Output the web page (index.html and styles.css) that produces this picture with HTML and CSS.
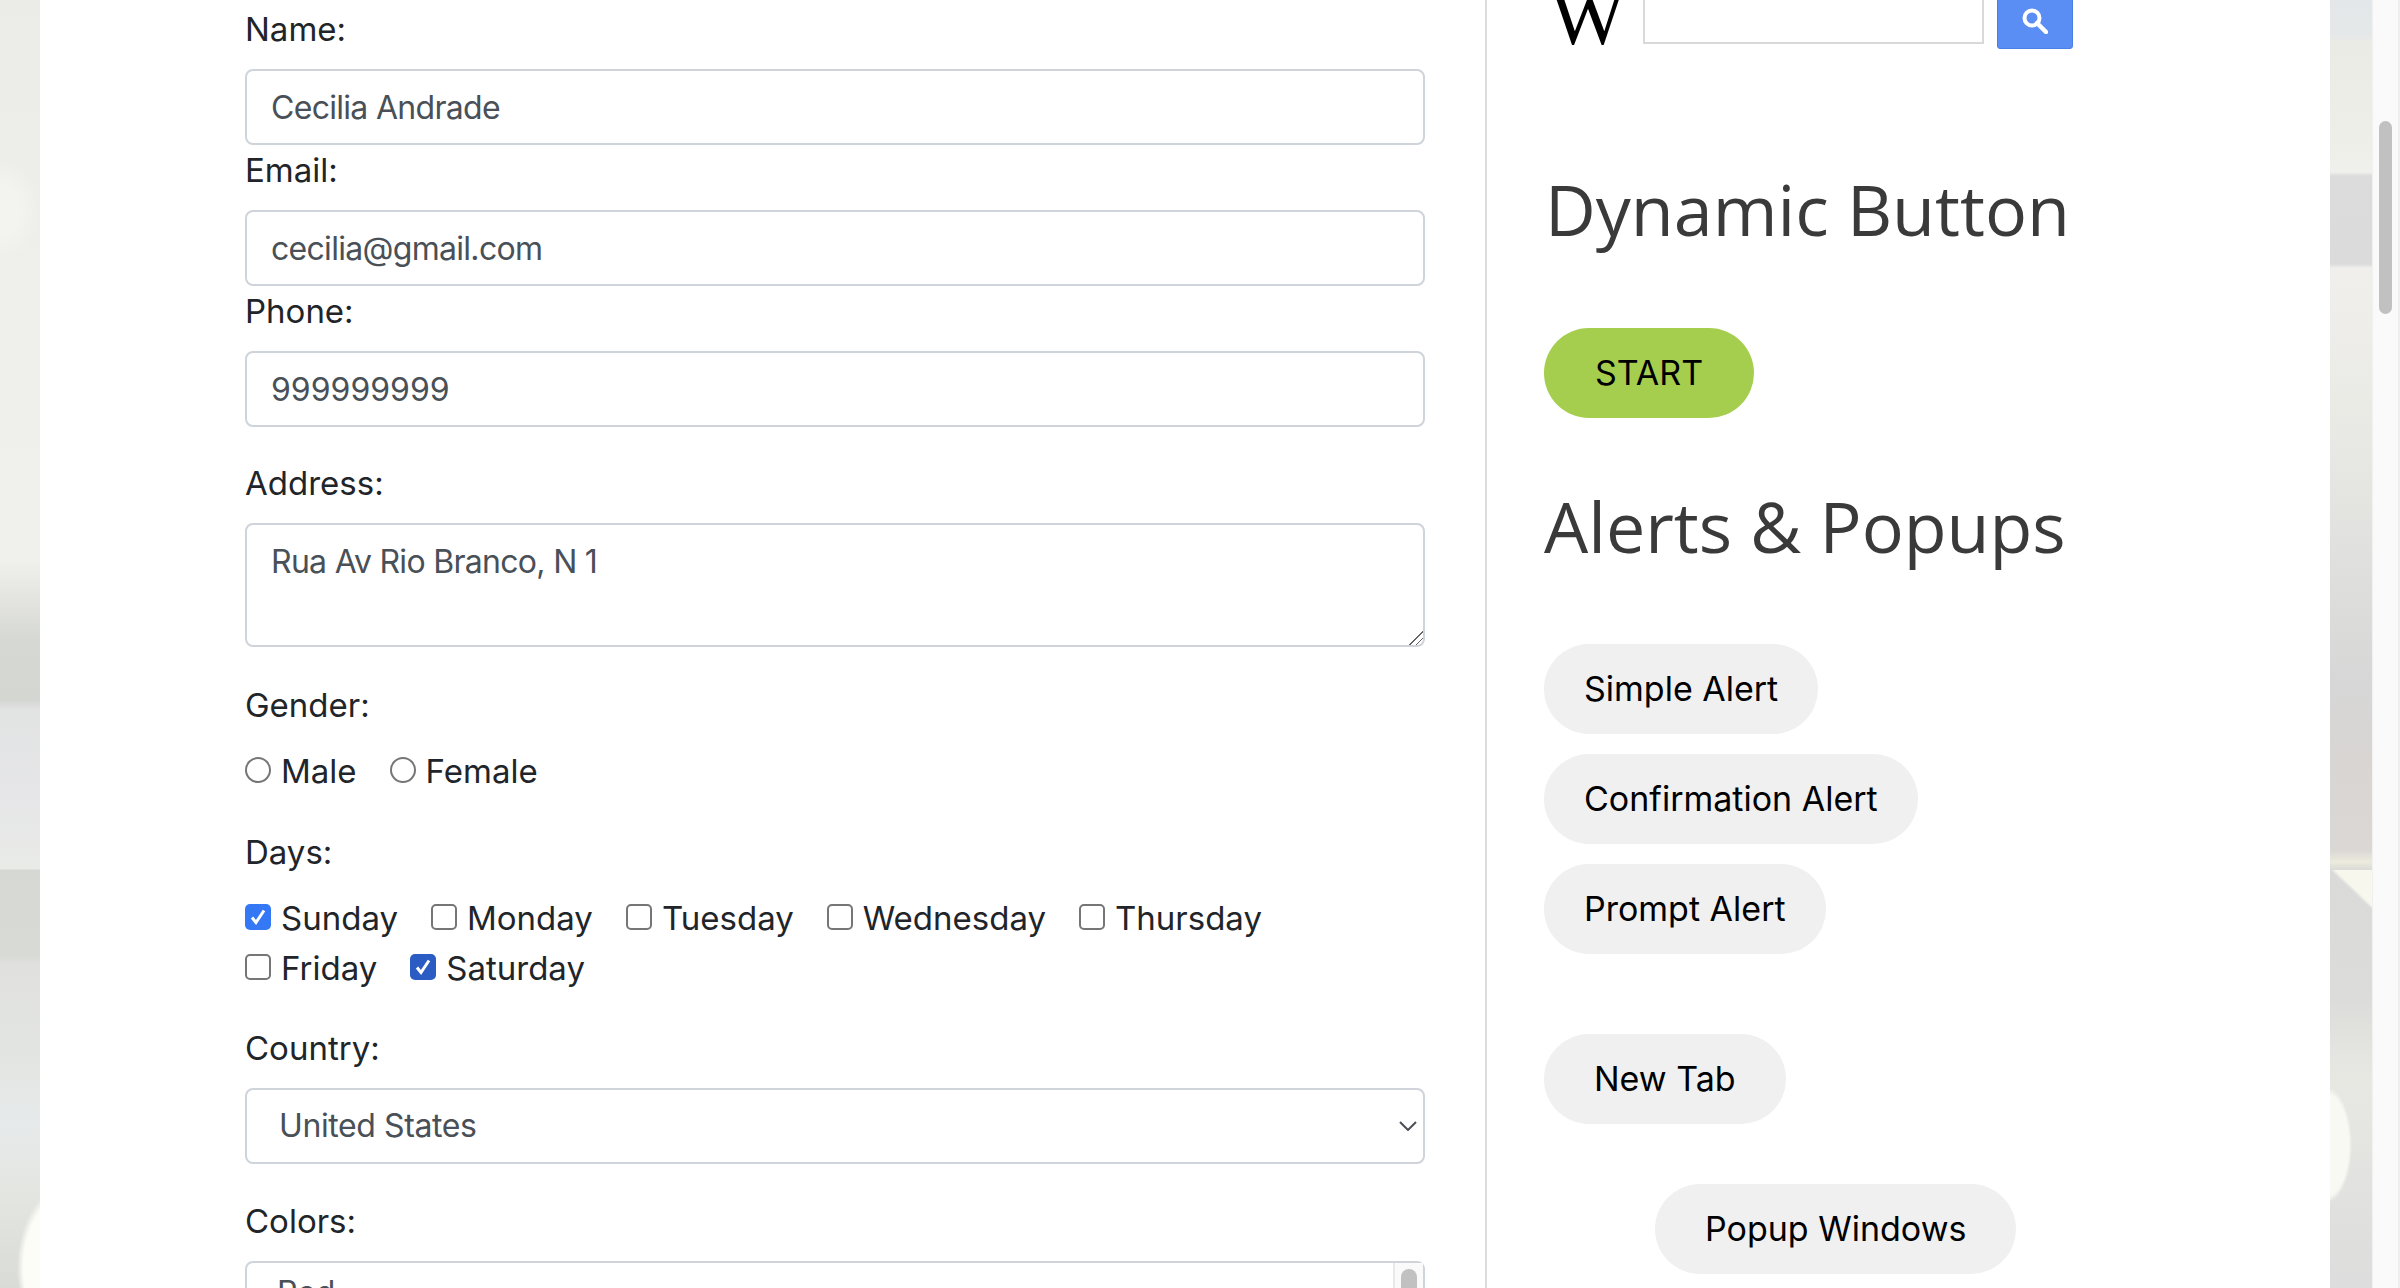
FILE: index.html
```html
<!DOCTYPE html>
<html lang="en">
<head>
    <meta charset="UTF-8">
    <meta name="viewport" content="width=device-width, initial-scale=1.0">
    <title>Automation Testing Practice</title>
    <link rel="stylesheet" href="styles.css">
</head>
<body>
    <div class="sheet">
        <form class="form-col">
            <label class="field-label" for="name">Name:</label>
            <input class="form-control" id="name" type="text" value="Cecilia Andrade">

            <label class="field-label tight" for="email">Email:</label>
            <input class="form-control" id="email" type="text" value="cecilia@gmail.com">

            <label class="field-label tight" for="phone">Phone:</label>
            <input class="form-control digits" id="phone" type="text" value="999999999">

            <label class="field-label address-label" for="address">Address:</label>
            <textarea class="form-control address" id="address">Rua Av Rio Branco, N 1</textarea>

            <div class="field-label gender-label">Gender:</div>
            <div class="options gender-options">
                <label class="option"><input type="radio" name="gender">Male</label>
                <label class="option"><input type="radio" name="gender">Female</label>
            </div>

            <div class="field-label days-label">Days:</div>
            <div class="options days-options">
                <label class="option"><input type="checkbox" checked>Sunday</label>
                <label class="option"><input type="checkbox">Monday</label>
                <label class="option"><input type="checkbox">Tuesday</label>
                <label class="option"><input type="checkbox">Wednesday</label>
                <label class="option"><input type="checkbox">Thursday</label>
                <label class="option"><input type="checkbox">Friday</label>
                <label class="option"><input type="checkbox" class="pressed" checked>Saturday</label>
            </div>

            <label class="field-label country-label" for="country">Country:</label>
            <div class="select-wrap">
                <select class="form-control country" id="country">
                    <option>United States</option>
                </select>
                <svg class="chevron" width="18" height="10" viewBox="0 0 18 10"><path d="M1 1l8 8 8-8" fill="none" stroke="#495057" stroke-width="2"/></svg>
            </div>

            <div class="field-label colors-label">Colors:</div>
            <div class="listbox">
                <div class="listbox-items">
                    <div>Red</div>
                    <div>Blue</div>
                </div>
                <div class="listbox-track"><div class="listbox-thumb"></div></div>
            </div>
        </form>

        <aside class="side-col">
            <div class="wiki-search">
                <span class="wiki-logo">W</span>
                <input class="wiki-input" type="text">
                <button class="wiki-button" type="button">
                    <svg width="26" height="26" viewBox="0 0 26 26"><circle cx="10" cy="10" r="7.5" fill="none" stroke="#fff" stroke-width="4"/><path d="M15 15l9 9" stroke="#fff" stroke-width="4.5" stroke-linecap="round"/></svg>
                </button>
            </div>

            <h2 class="side-title dynamic-title">Dynamic Button</h2>
            <button class="pill start" type="button">START</button>

            <h2 class="side-title alerts-title">Alerts &amp; Popups</h2>
            <div class="pill-stack">
                <button class="pill" type="button">Simple Alert</button>
                <button class="pill" type="button">Confirmation Alert</button>
                <button class="pill" type="button">Prompt Alert</button>
            </div>
            <button class="pill new-tab" type="button">New Tab</button>
            <button class="pill popup" type="button">Popup Windows</button>
        </aside>
    </div>

    <div class="scrollbar"><div class="scrollbar-thumb"></div></div>
</body>
</html>
```

FILE: styles.css
```css
* {
    box-sizing: border-box;
}

html, body {
    height: 1288px;
    margin: 0;
    overflow: hidden;
}

body {
    display: flex;
    padding-left: 40px;
    font-family: Inter, "Liberation Sans", sans-serif;
    font-size: 33px;
    line-height: 48px;
    color: #212529;
    background-color: #e6e8e3;
    /* blurred photo behind the page: left strip first, then right strip */
    background-image:
        radial-gradient(ellipse 55px 85px at 72px 1268px, #fdfdf8 0 88%, transparent 100%),
        radial-gradient(ellipse 40px 50px at 0 210px, #f3f4f0 0 50%, transparent 100%),
        linear-gradient(to bottom, #ebece7 0, #eff0eb 300px, #f0f0ec 560px, #d6d8d4 640px, #d4d6d2 700px, #e2e3e3 710px, #e6e6e8 800px, #e9ebe7 869px, #d6d8d3 870px, #d8dad5 955px, #e0e1de 965px, #e3e5e2 1060px, #e6eaea 1120px, #e4e6e2 1190px, #d9dbd7 1288px),
        linear-gradient(to top right, transparent 50%, #f7f7ee 56%),
        radial-gradient(ellipse 26px 58px at -4px 1145px, #f9f9f4 0 88%, transparent 100%),
        linear-gradient(to bottom, #e4e7e9 0, #e5e8e9 35px, #ebebe6 42px, #eeeee8 130px, #f0f0ec 172px, #dcdcdc 176px, #dbdbdb 264px, #f0efec 268px, #ebebe6 400px, #e4e4e1 500px, #d7d7d7 680px, #d8d5d3 760px, #dad7d5 850px, #ecebdc 862px, #dadad8 870px, #dcdcda 1000px, #e8e8e3 1080px, #e2e2e0 1180px, #dcdddc 1288px);
    background-size: 40px 1288px, 40px 1288px, 40px 1288px, 42px 40px, 42px 1288px, 42px 1288px;
    background-position: 0 0, 0 0, 0 0, 2330px 870px, 2330px 0, 2330px 0;
    background-repeat: no-repeat;
}

.sheet {
    display: flex;
    flex: none;
    width: 2290px;
    height: 1288px;
    padding-left: 205px;
    background: #fff;
    overflow: hidden;
}

.form-col {
    flex: none;
    width: 1180px;
    padding-top: 5px;
}

.field-label {
    display: block;
    height: 48px;
    margin-bottom: 16px;
}

.tight { margin-top: 1px; }
.address-label { margin-top: 32px; }
.gender-label { margin-top: 34px; margin-bottom: 18px; }
.days-label { margin-top: 33px; margin-bottom: 18px; }
.country-label { margin-top: 32px; }
.colors-label { margin-top: 33px; }

.form-control {
    display: block;
    width: 100%;
    height: 76px;
    padding: 12px 24px;
    font: inherit;
    font-size: 32px;
    letter-spacing: -0.7px;
    color: #495057;
    background: #fff;
    border: 2px solid #ced4da;
    border-radius: 8px;
    outline: none;
}

.digits { letter-spacing: 0; }

.address {
    height: 124px;
    padding-top: 13px;
}

.address::-webkit-resizer {
    background: linear-gradient(135deg, transparent 0 52%, #666 52% 58%, transparent 58% 74%, #666 74% 80%, transparent 80%);
}

.options {
    display: flex;
    flex-wrap: wrap;
    column-gap: 33px;
}

.days-options {
    row-gap: 2px;
    padding-right: 60px;
}

.option {
    display: flex;
    align-items: center;
    height: 48px;
}

.option input {
    flex: none;
    width: 26px;
    height: 26px;
    margin: -2px 10px 0 0;
    appearance: none;
    background: #fff no-repeat center / 20px 20px;
    border: 2px solid #767676;
    border-radius: 5px;
}

.option input[type="radio"] { border-radius: 50%; }

.option input:checked {
    background-color: #3478f6;
    background-image: url("data:image/svg+xml,%3Csvg xmlns='http://www.w3.org/2000/svg' viewBox='0 0 20 20'%3E%3Cpath d='M4 10.5l4 5 8-12' fill='none' stroke='%23fff' stroke-width='3'/%3E%3C/svg%3E");
    border: none;
}

.option input.pressed:checked { background-color: #2a5cc4; }

.select-wrap { position: relative; }

.country {
    padding-left: 32px;
    letter-spacing: -0.4px;
    appearance: none;
}

.chevron {
    position: absolute;
    top: 33px;
    right: 8px;
}

.listbox {
    display: flex;
    height: 100px;
    font-size: 32px;
    border: 2px solid #ced4da;
    border-radius: 8px;
    color: #495057;
}

.listbox-items {
    flex: 1;
    padding: 6px 30px 0;
}

.listbox-track {
    flex: none;
    width: 30px;
    padding: 6px 6px 0;
    background: #fafafa;
    border-left: 2px solid #e8e8e8;
}

.listbox-thumb {
    height: 60px;
    background: #c1c1c1;
    border-radius: 8px;
}

.side-col {
    flex: none;
    width: 845px;
    margin-left: 60px;
    padding-left: 57px;
    border-left: 2px solid #dcdcdc;
}

.wiki-search {
    display: flex;
    align-items: flex-end;
    height: 70px;
    margin-top: -26px;
}

.wiki-logo {
    flex: none;
    width: 99px;
    height: 64px;
    padding-left: 6px;
    font-family: "Liberation Serif", serif;
    font-size: 80px;
    line-height: 74px;
    color: #000;
}

.wiki-input {
    flex: none;
    width: 341px;
    height: 64px;
    border: 2px solid #d9d9d9;
    background: #fff;
}

.wiki-button {
    display: flex;
    align-items: center;
    justify-content: center;
    flex: none;
    width: 76px;
    height: 70px;
    margin: 0 0 -5px 13px;
    padding: 14px 0 0;
    background: #5b8ef5;
    border: 1px solid #4a7fe8;
    border-radius: 3px;
}

.side-title {
    margin: 0;
    font-family: "Open Sans", sans-serif;
    font-size: 70px;
    font-weight: 400;
    line-height: 96px;
    color: #3a3a3a;
}

.dynamic-title { margin: 117px 0 0 1px; }
.alerts-title { margin-top: 60px; }

.pill {
    display: block;
    height: 90px;
    padding: 0 40px;
    font: inherit;
    font-size: 34px;
    color: #000;
    background: #f0f0f0;
    border: none;
    border-radius: 45px;
}

.start {
    margin-top: 71px;
    padding: 0 51px;
    background: #a6ce4e;
}

.pill-stack {
    display: flex;
    flex-direction: column;
    align-items: flex-start;
    gap: 20px;
    margin-top: 70px;
}

.new-tab {
    margin-top: 80px;
    padding: 0 50px;
}

.popup {
    margin: 60px 0 0 111px;
    padding: 0 50px;
}

.scrollbar {
    position: absolute;
    top: 0;
    right: 0;
    width: 28px;
    height: 1288px;
    padding: 121px 6px 0;
    background: #fafafa;
    border-left: 1px solid #f0f0f0;
    border-right: 2px solid #eee;
}

.scrollbar-thumb {
    height: 193px;
    background: #c1c1c1;
    border-radius: 8px;
}
```
